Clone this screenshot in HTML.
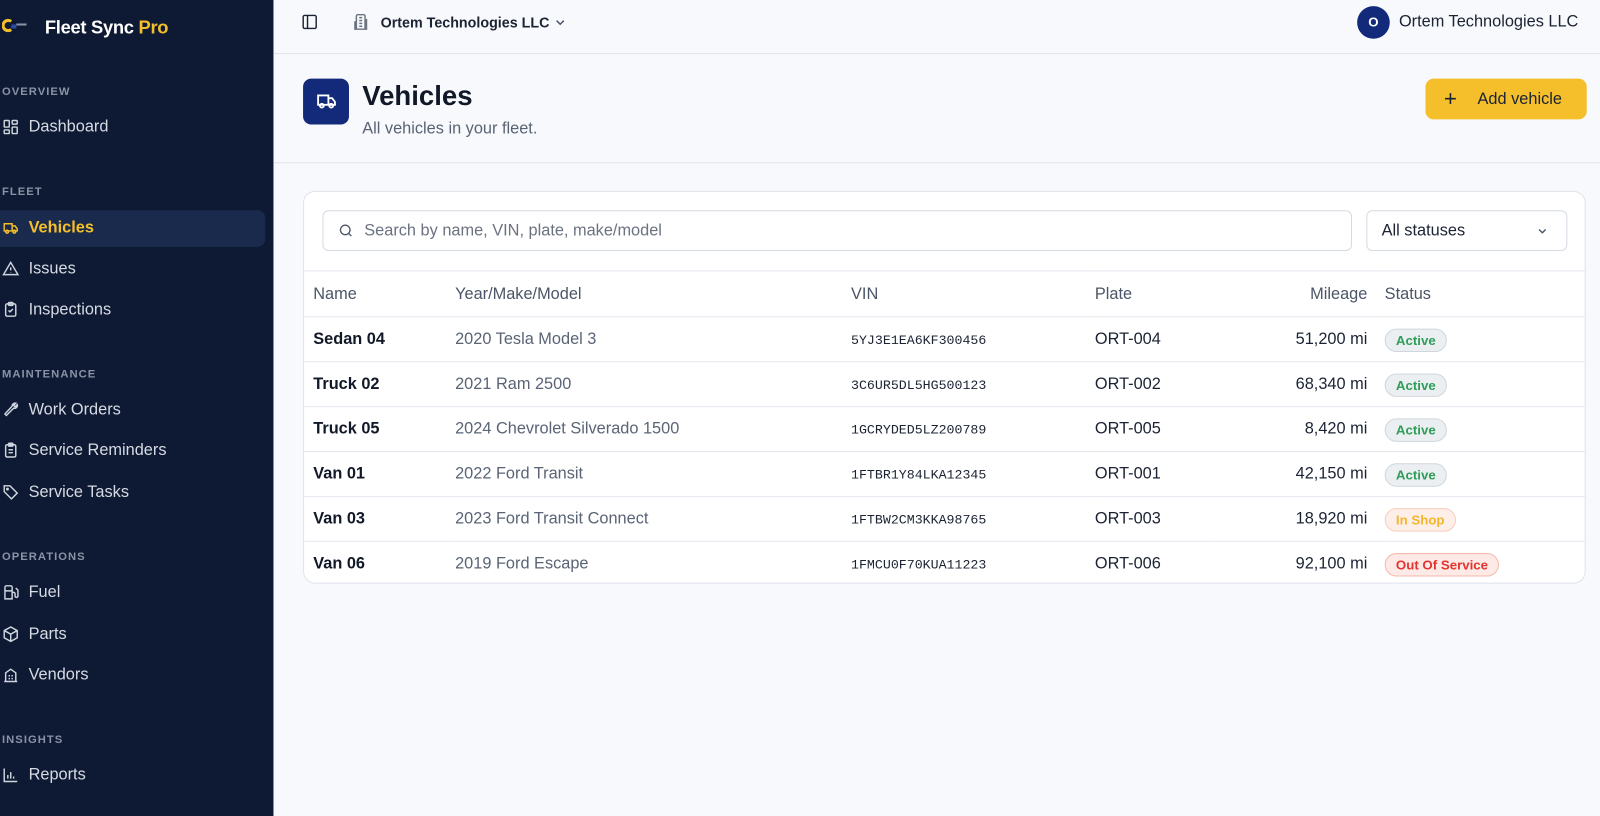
<!DOCTYPE html>
<html><head><meta charset="utf-8"><style>
*{box-sizing:border-box;margin:0;padding:0}
html,body{width:1600px;height:816px;overflow:hidden}
body{font-family:"Liberation Sans",sans-serif;background:#f7f9fc;position:relative}
#w{position:absolute;left:0;top:0;width:1568px;height:800px;transform:scale(1.0204);transform-origin:0 0}
.sb{position:absolute;left:0;top:0;width:268px;height:800px;background:#0e1a33;color:#d2d7e0}
.sb .lbl{position:absolute;left:2px;font-size:11px;font-weight:bold;letter-spacing:1px;color:#8a93a6}
.sb .it{position:absolute;left:0;width:260px;height:36px;font-size:16px;color:#d5dae3}
.sb .it svg{position:absolute;left:2px;top:9px;width:17px;height:17px}
.sb .it span{position:absolute;left:28px;top:9px}
.act{background:#1a2a4d;border-radius:0 8px 8px 0;color:#f4bf2a!important;font-weight:bold}
.top{position:absolute;left:268px;top:0;right:0;height:53px;border-bottom:1px solid #e0e5ec}
.hdr{position:absolute;left:268px;top:53px;right:0;height:107px;border-bottom:1px solid #e0e5ec}
.card{position:absolute;left:297px;top:187px;width:1257px;height:385px;background:#fff;border:1px solid #dfe4eb;border-radius:12px;overflow:hidden}
table{border-collapse:collapse;position:absolute;top:77px;left:0;width:1257px}
td,th{height:44px;font-size:16px;text-align:left;border-top:1px solid #e3e8ee;white-space:nowrap;padding-top:1px}
th{font-weight:normal;color:#4b5567;height:45px}
td{color:#1b2333}
.n{font-weight:bold;color:#111827;padding-left:9px}
.y{color:#5a6475}
.v{font-family:"Liberation Mono",monospace;font-size:13px}
.m{text-align:right;padding-right:17px}
.b{display:inline-block;font-size:13px;font-weight:bold;padding:3px 10px;border-radius:12px;border:1px solid}
.ga{color:#2f9e5a;background:#eceff1;border-color:#cfd6dc}
.sh{color:#f4b62c;background:#fdeee8;border-color:#f7cdbd}
.os{color:#e3342f;background:#fde9e5;border-color:#f5b9ad}
</style></head><body><div id="w">
<div class="sb">
 <svg style="position:absolute;left:2px;top:18px" width="26" height="14" viewBox="0 0 26 14"><path d="M9 3a5 5 0 1 0 0 8" stroke="#f4bf2a" stroke-width="3" fill="none"/><rect x="9" y="6" width="5" height="4" fill="#2b4aa5"/><rect x="14" y="5" width="10" height="2" fill="#8893a8"/></svg>
 <div style="position:absolute;left:44px;top:17px;font-size:18px;font-weight:bold;color:#fff;letter-spacing:-0.3px">Fleet Sync <span style="color:#f4bf2a">Pro</span></div>
 <div class="lbl" style="top:84px">OVERVIEW</div>
 <div class="it" style="top:107px"><svg viewBox="0 0 24 24" fill="none" stroke="#cfd5df" stroke-width="2"><rect x="3" y="3" width="7" height="9" rx="1"/><rect x="14" y="3" width="7" height="5" rx="1"/><rect x="14" y="12" width="7" height="9" rx="1"/><rect x="3" y="16" width="7" height="5" rx="1"/></svg><span>Dashboard</span></div>
 <div class="lbl" style="top:182px">FLEET</div>
 <div class="it act" style="top:206px"><svg viewBox="0 0 24 24" fill="none" stroke="#f4bf2a" stroke-width="2"><path d="M3 6h11v10H3zM14 9h4l3 4v3h-7"/><circle cx="7" cy="17" r="2"/><circle cx="17" cy="17" r="2"/></svg><span>Vehicles</span></div>
 <div class="it" style="top:246px"><svg viewBox="0 0 24 24" fill="none" stroke="#cfd5df" stroke-width="2"><path d="M12 3 2 20h20L12 3zM12 10v4M12 17v.5"/></svg><span>Issues</span></div>
 <div class="it" style="top:286px"><svg viewBox="0 0 24 24" fill="none" stroke="#cfd5df" stroke-width="2"><rect x="5" y="4" width="14" height="17" rx="2"/><rect x="9" y="2" width="6" height="4" rx="1"/><path d="m9 13 2 2 4-4"/></svg><span>Inspections</span></div>
 <div class="lbl" style="top:361px">MAINTENANCE</div>
 <div class="it" style="top:384px"><svg viewBox="0 0 24 24" fill="none" stroke="#cfd5df" stroke-width="2"><path d="M14 7a4 4 0 0 1 5-4l-3 3 2 2 3-3a4 4 0 0 1-5 5L6 20l-2-2z"/></svg><span>Work Orders</span></div>
 <div class="it" style="top:424px"><svg viewBox="0 0 24 24" fill="none" stroke="#cfd5df" stroke-width="2"><rect x="5" y="4" width="14" height="17" rx="2"/><rect x="9" y="2" width="6" height="4" rx="1"/><path d="M9 11h6M9 15h6"/></svg><span>Service Reminders</span></div>
 <div class="it" style="top:465px"><svg viewBox="0 0 24 24" fill="none" stroke="#cfd5df" stroke-width="2"><path d="M3 3h8l10 10-8 8L3 11z"/><circle cx="7.5" cy="7.5" r="1"/></svg><span>Service Tasks</span></div>
 <div class="lbl" style="top:540px">OPERATIONS</div>
 <div class="it" style="top:563px"><svg viewBox="0 0 24 24" fill="none" stroke="#cfd5df" stroke-width="2"><path d="M4 21V5a2 2 0 0 1 2-2h6a2 2 0 0 1 2 2v16M3 21h12M4 10h10M14 12h2a2 2 0 0 1 2 2v3a2 2 0 0 0 4 0V9l-3-3"/></svg><span>Fuel</span></div>
 <div class="it" style="top:604px"><svg viewBox="0 0 24 24" fill="none" stroke="#cfd5df" stroke-width="2"><path d="M12 2 3 7v10l9 5 9-5V7zM3 7l9 5 9-5M12 12v10"/></svg><span>Parts</span></div>
 <div class="it" style="top:644px"><svg viewBox="0 0 24 24" fill="none" stroke="#cfd5df" stroke-width="2"><path d="M3 21h18M5 21V9l7-5 7 5v12M9 13h2M13 13h2M9 17h2M13 17h2"/></svg><span>Vendors</span></div>
 <div class="lbl" style="top:719px">INSIGHTS</div>
 <div class="it" style="top:742px"><svg viewBox="0 0 24 24" fill="none" stroke="#cfd5df" stroke-width="2"><path d="M3 3v18h18M8 17v-5M12 17V8M16 17v-3"/></svg><span>Reports</span></div>
</div>
<div class="top">
 <svg style="position:absolute;left:27px;top:13px" width="17" height="17" viewBox="0 0 24 24" fill="none" stroke="#1b2333" stroke-width="2"><rect x="3" y="3" width="18" height="18" rx="2"/><path d="M9 3v18"/></svg>
 <svg style="position:absolute;left:77px;top:13px" width="17" height="17" viewBox="0 0 24 24" fill="none" stroke="#6b7280" stroke-width="2"><path d="M6 22V4a2 2 0 0 1 2-2h8a2 2 0 0 1 2 2v18zM6 12H4v10h2M18 9h2v13h-2M10 6h4M10 10h4M10 14h4M10 18h4"/></svg>
 <div style="position:absolute;left:105px;top:14px;font-size:14px;font-weight:bold;color:#1b2333">Ortem Technologies LLC</div>
 <svg style="position:absolute;left:274px;top:15px" width="14" height="14" viewBox="0 0 24 24" fill="none" stroke="#4b5567" stroke-width="2.5"><path d="m6 9 6 6 6-6"/></svg>
 <div style="position:absolute;left:1062px;top:6px;width:32px;height:32px;border-radius:50%;background:#13297a;color:#fff;font-weight:bold;font-size:13px;text-align:center;line-height:32px">O</div>
 <div style="position:absolute;left:1103px;top:13px;font-size:16px;color:#1b2333">Ortem Technologies LLC</div>
</div>
<div class="hdr">
 <div style="position:absolute;left:29px;top:24px;width:45px;height:45px;background:#13297a;border-radius:8px"></div>
 <svg style="position:absolute;left:41px;top:35px" width="22" height="22" viewBox="0 0 24 24" fill="none" stroke="#fff" stroke-width="2"><path d="M3 6h11v10H3zM14 9h4l3 4v3h-7"/><circle cx="7" cy="17" r="2"/><circle cx="17" cy="17" r="2"/></svg>
 <div style="position:absolute;left:87px;top:26px;font-size:27px;font-weight:bold;color:#111827">Vehicles</div>
 <div style="position:absolute;left:87px;top:65px;font-size:16px;color:#5a6475">All vehicles in your fleet.</div>
 <div style="position:absolute;left:1129px;top:24px;width:158px;height:40px;background:#f4bf2a;border-radius:8px;font-size:16px;color:#1b2333;line-height:40px"><span style="position:absolute;left:18px;font-size:22px">+</span><span style="position:absolute;left:51px;top:1px">Add vehicle</span></div>
</div>
<div class="card">
 <div style="position:absolute;left:18px;top:18px;width:1009px;height:40px;border:1px solid #d5dbe3;border-radius:6px"></div>
 <svg style="position:absolute;left:33px;top:30px" width="16" height="16" viewBox="0 0 24 24" fill="none" stroke="#4b5567" stroke-width="2"><circle cx="11" cy="11" r="7"/><path d="m20 20-4-4"/></svg>
 <div style="position:absolute;left:59px;top:30px;font-size:16px;color:#6b7280">Search by name, VIN, plate, make/model</div>
 <div style="position:absolute;left:1041px;top:18px;width:197px;height:40px;border:1px solid #d5dbe3;border-radius:6px;font-size:16px;color:#1b2333;padding:11px 0 0 14px">All statuses</div>
 <svg style="position:absolute;left:1207px;top:32px" width="13" height="13" viewBox="0 0 24 24" fill="none" stroke="#4b5567" stroke-width="2.5"><path d="m6 9 6 6 6-6"/></svg>
 <table>
 <tr><th style="padding-left:9px;width:148px">Name</th><th style="width:388px">Year/Make/Model</th><th style="width:239px">VIN</th><th style="width:118px">Plate</th><th class="m" style="width:166px">Mileage</th><th>Status</th></tr>
 <tr><td class="n">Sedan 04</td><td class="y">2020 Tesla Model 3</td><td class="v">5YJ3E1EA6KF300456</td><td>ORT-004</td><td class="m">51,200 mi</td><td><span class="b ga">Active</span></td></tr>
 <tr><td class="n">Truck 02</td><td class="y">2021 Ram 2500</td><td class="v">3C6UR5DL5HG500123</td><td>ORT-002</td><td class="m">68,340 mi</td><td><span class="b ga">Active</span></td></tr>
 <tr><td class="n">Truck 05</td><td class="y">2024 Chevrolet Silverado 1500</td><td class="v">1GCRYDED5LZ200789</td><td>ORT-005</td><td class="m">8,420 mi</td><td><span class="b ga">Active</span></td></tr>
 <tr><td class="n">Van 01</td><td class="y">2022 Ford Transit</td><td class="v">1FTBR1Y84LKA12345</td><td>ORT-001</td><td class="m">42,150 mi</td><td><span class="b ga">Active</span></td></tr>
 <tr><td class="n">Van 03</td><td class="y">2023 Ford Transit Connect</td><td class="v">1FTBW2CM3KKA98765</td><td>ORT-003</td><td class="m">18,920 mi</td><td><span class="b sh">In Shop</span></td></tr>
 <tr><td class="n">Van 06</td><td class="y">2019 Ford Escape</td><td class="v">1FMCU0F70KUA11223</td><td>ORT-006</td><td class="m">92,100 mi</td><td><span class="b os">Out Of Service</span></td></tr>
 </table>
</div>
</div></body></html>
